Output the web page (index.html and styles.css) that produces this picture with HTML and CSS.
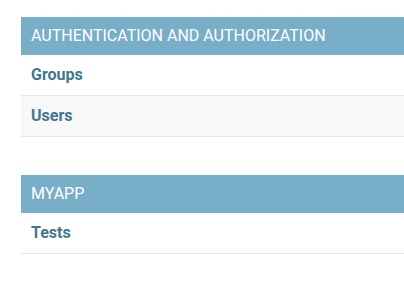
FILE: index.html
```html
<!DOCTYPE html>
<html>
<head>
<meta charset="utf-8">
<link rel="stylesheet" href="styles.css">
</head>
<body>
<div class="content">
  <div class="module">
    <div class="caption">Authentication and Authorization</div>
    <div class="row"><a href="#">Groups</a></div>
    <div class="row alt"><a href="#">Users</a></div>
  </div>
  <div class="module">
    <div class="caption">Myapp</div>
    <div class="row"><a href="#">Tests</a></div>
  </div>
</div>
</body>
</html>
```
FILE: styles.css
```css
html, body { margin: 0; padding: 0; background: #fff; }
body { font-family: Roboto, "Noto Sans", sans-serif; }
.content { padding: 17px 0 0 21px; display: flex; flex-direction: column; gap: 38px; }
.module { display: flex; flex-direction: column; }
.caption {
  background: #79aec8;
  color: #fff;
  text-transform: uppercase;
  font-size: 16px;
  height: 38px;
  line-height: 38px;
  padding: 0 10px;
}
.row {
  height: 40px;
  line-height: 40px;
  padding: 0 10px;
  border-bottom: 1px solid #e8e8e8;
  background: #fff;
}
.row.alt { background: #f8f8f8; }
.row a {
  color: #417690;
  font-weight: 700;
  font-size: 16px;
  text-decoration: none;
}
```
